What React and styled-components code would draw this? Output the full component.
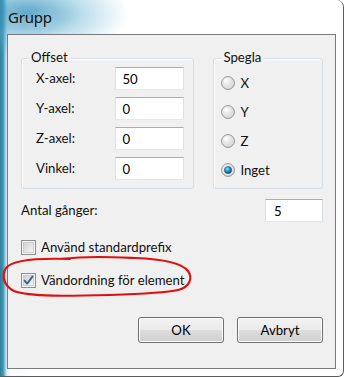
import React from 'react';
import styled, { createGlobalStyle } from 'styled-components';

const GlobalStyle = createGlobalStyle`
  html, body { margin: 0; padding: 0; background: #fff; }
  body { font-family: Lato, "Noto Sans", sans-serif; }
`;

const Frame = styled.div`
  position: relative;
  width: 344px;
  height: 377px;
  box-sizing: border-box;
  border-right: 1px solid #5c5c5c;
  border-bottom: 1px solid #5c5c5c;
  border-top-right-radius: 7px;
  border-bottom-right-radius: 6px;
  background:
    radial-gradient(ellipse 100px 44px at 28px 14px, rgba(45, 140, 185, 0.8), rgba(90, 175, 210, 0.4) 55%, rgba(255,255,255,0) 100%),
    linear-gradient(90deg, #2f7f99 0px, #3f93ad 3px, #8cc6da 5px, #e3f1f7 7px, #f7fbfd 10px, #ffffff 40px);
  display: flex;
  flex-direction: column;
  overflow: hidden;
`;

const TitleBar = styled.div`
  height: 34px;
  padding-left: 8px;
  display: flex;
  align-items: center;
  font-family: "Noto Sans", sans-serif;
  font-size: 15px;
  color: #101010;
  letter-spacing: -0.2px;
  text-shadow: 0 0 8px rgba(255, 255, 255, 0.6);
`;

const Client = styled.div`
  margin-left: 7px;
  width: 329px;
  height: 335px;
  box-sizing: border-box;
  border: 1px solid #7a7a7a;
  background: #f0f0f0;
  padding: 23px 12px 0 13px;
  font-size: 13.2px;
  color: #111;
  display: flex;
  flex-direction: column;
`;

const TopRow = styled.div`
  display: flex;
  gap: 19px;
`;

const GroupBox = styled.div`
  position: relative;
  width: ${({ $w }) => $w}px;
  height: 131px;
  box-sizing: border-box;
  border: 1px solid #d5dfe5;
  border-radius: 3px;
  box-shadow: inset 1px 1px 0 #fff;
  padding: ${({ $pad }) => $pad};
`;

const GroupLabel = styled.span`
  position: absolute;
  top: -11px;
  left: 7px;
  padding: 0 2px;
  background: #f0f0f0;
  line-height: 19px;
`;

const FieldGrid = styled.div`
  display: grid;
  grid-template-columns: 1fr 69px;
  grid-auto-rows: 23px;
  row-gap: 7px;
  align-items: center;
`;

const Label = styled.span`
  line-height: 19px;
`;

const TextBox = styled.div`
  width: ${({ $w }) => $w || 69}px;
  height: 23px;
  box-sizing: border-box;
  background: #fff;
  border: 1px solid #dde1e8;
  border-top-color: #abadb3;
  border-bottom-color: #e3e9ef;
  padding-left: ${({ $pl }) => $pl || 6}px;
  display: flex;
  align-items: center;
  font-size: 13.2px;
  color: #000;
`;

const RadioList = styled.div`
  display: flex;
  flex-direction: column;
  gap: 7px;
`;

const RadioRow = styled.div`
  display: flex;
  align-items: center;
  gap: 5px;
  height: 22px;
`;

const Radio = ({ checked }) => (
  <svg width="14" height="14" viewBox="0 0 14 14">
    <defs>
      <radialGradient id="rg" cx="0.35" cy="0.3" r="0.8">
        <stop offset="0" stopColor="#ffffff" />
        <stop offset="1" stopColor="#c9cbcd" />
      </radialGradient>
      <radialGradient id="dot" cx="0.4" cy="0.35" r="0.7">
        <stop offset="0" stopColor="#8fe0ff" />
        <stop offset="0.5" stopColor="#1f8cc7" />
        <stop offset="1" stopColor="#0c3f6a" />
      </radialGradient>
    </defs>
    <circle cx="7" cy="7" r="6.4" fill="url(#rg)" stroke="#8f9193" strokeWidth="1" />
    <circle cx="7" cy="7" r="5" fill="none" stroke="#e4e4e4" strokeWidth="0.8" />
    {checked && <circle cx="7" cy="7" r="3.6" fill="url(#dot)" stroke="#1d4f77" strokeWidth="0.6" />}
  </svg>
);

const AntalRow = styled.div`
  margin-top: 10px;
  display: flex;
  align-items: center;
  justify-content: space-between;
`;

const CheckRow = styled.div`
  display: flex;
  align-items: center;
  gap: 5px;
  height: 20px;
  margin-top: ${({ $mt }) => $mt}px;
`;

const Check = ({ checked }) => (
  <svg width="15" height="15" viewBox="0 0 15 15">
    <defs>
      <linearGradient id="cb" x1="0" y1="0" x2="1" y2="1">
        <stop offset="0" stopColor="#cfd0d2" />
        <stop offset="1" stopColor="#f6f6f6" />
      </linearGradient>
    </defs>
    <rect x="0.5" y="0.5" width="14" height="14" fill="#f4f4f4" stroke="#8f8f8f" />
    <rect x="2.5" y="2.5" width="10" height="10" fill="url(#cb)" stroke="#c4c6c8" strokeWidth="0.8" />
    {checked && (
      <path d="M3.6 7.6 L6.2 10.6 L11.6 3.4" fill="none" stroke="#3f5f8f" strokeWidth="1.9" strokeLinecap="round" strokeLinejoin="round" />
    )}
  </svg>
);

const ButtonRow = styled.div`
  margin-top: 27px;
  display: flex;
  justify-content: flex-end;
  gap: 13px;
`;

const Button = styled.div`
  width: 86px;
  height: 26px;
  box-sizing: border-box;
  border: 1px solid #707070;
  border-radius: 3px;
  box-shadow: inset 0 0 0 1px #fcfcfc;
  background: linear-gradient(#f2f2f2 0%, #ebebeb 48%, #dddddd 52%, #cfcfcf 100%);
  display: flex;
  align-items: center;
  justify-content: center;
  color: #000;
  font-size: 13.2px;
`;

const Scribble = styled.svg`
  position: absolute;
  left: 0;
  top: 250px;
  pointer-events: none;
`;

export default function App() {
  return (
    <>
      <GlobalStyle />
      <Frame>
        <TitleBar>Grupp</TitleBar>
        <Client>
          <TopRow>
            <GroupBox $w={174} $pad="8px 9px 7px 14px">
              <GroupLabel>Offset</GroupLabel>
              <FieldGrid>
                <Label>X-axel:</Label>
                <TextBox>50</TextBox>
                <Label>Y-axel:</Label>
                <TextBox>0</TextBox>
                <Label>Z-axel:</Label>
                <TextBox>0</TextBox>
                <Label>Vinkel:</Label>
                <TextBox>0</TextBox>
              </FieldGrid>
            </GroupBox>
            <GroupBox $w={110} $pad="13px 0 0 7px">
              <GroupLabel>Spegla</GroupLabel>
              <RadioList>
                <RadioRow><Radio />X</RadioRow>
                <RadioRow><Radio />Y</RadioRow>
                <RadioRow><Radio />Z</RadioRow>
                <RadioRow><Radio checked />Inget</RadioRow>
              </RadioList>
            </GroupBox>
          </TopRow>
          <AntalRow>
            <Label>Antal gånger:</Label>
            <TextBox $w={58} $pl={8}>5</TextBox>
          </AntalRow>
          <CheckRow $mt={15}><Check />Använd standardprefix</CheckRow>
          <CheckRow $mt={13}><Check checked />Vändordning för element</CheckRow>
          <ButtonRow>
            <Button>OK</Button>
            <Button>Avbryt</Button>
          </ButtonRow>
        </Client>
        <Scribble width="200" height="52" viewBox="0 0 200 52">
          <path
            d="M70 9 C 40 8, 12 10, 6 18 C 1 26, 4 36, 14 41 C 30 47, 70 46, 110 45 C 140 44, 165 43, 178 40 C 190 37, 193 28, 188 21 C 182 13, 160 9, 135 8 C 110 7, 90 6, 60 9"
            fill="none"
            stroke="#e01010"
            strokeWidth="2.2"
            strokeLinecap="round"
          />
        </Scribble>
      </Frame>
    </>
  );
}
